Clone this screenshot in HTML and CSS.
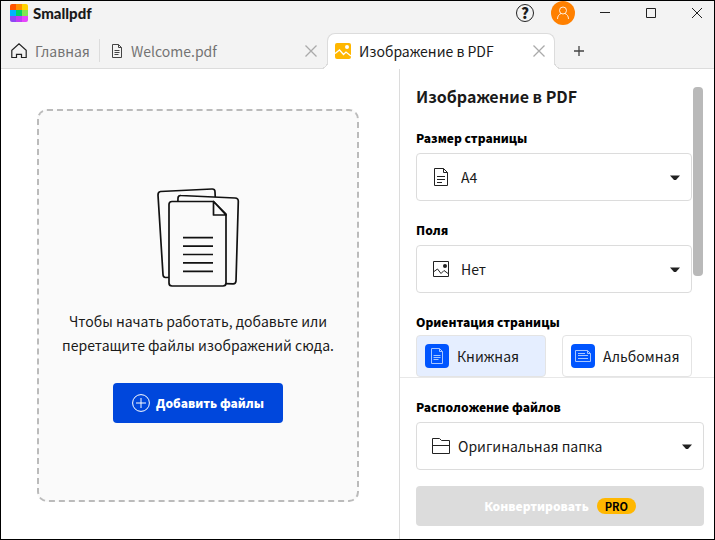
FILE: index.html
```html
<!DOCTYPE html>
<html lang="ru">
<head>
<meta charset="utf-8">
<meta name="viewport" content="width=device-width, initial-scale=1">
<title>Smallpdf</title>
<link rel="stylesheet" href="styles.css">
</head>
<body>
<div class="window">
  <header class="titlebar">
    <div class="brand">
      <svg class="brand-mark" viewBox="0 0 18 18" width="18" height="18" aria-hidden="true">
        <clipPath id="mark"><rect width="18" height="18" rx="2"/></clipPath>
        <g clip-path="url(#mark)">
          <path fill="#ff5300" d="M0 0h6v6H0z"/><path fill="#ff8f00" d="M6 0h6v6H6z"/><path fill="#ffd200" d="M12 0h6v6h-6z"/>
          <path fill="#00b4ff" d="M0 6h6v6H0z"/><path fill="#00d267" d="M6 6h6v6H6z"/><path fill="#81e650" d="M12 6h6v6h-6z"/>
          <path fill="#8f47f4" d="M0 12h6v6H0z"/><path fill="#c03cf5" d="M6 12h6v6H6z"/><path fill="#e646fa" d="M12 12h6v6h-6z"/>
        </g>
      </svg>
      <span class="brand-name">Smallpdf</span>
    </div>
    <div class="window-tools">
      <button class="help" type="button" aria-label="Справка">?</button>
      <button class="avatar" type="button" aria-label="Профиль">
        <svg viewBox="0 0 24 24" width="24" height="24" fill="none" stroke="#fff" stroke-opacity=".85"><circle cx="12" cy="9.500" r="3.500"/><path d="M6.500 18c0-3 1.500-4.500 3.500-5.500M17.500 18c0-3-1.500-4.500-3.500-5.500"/></svg>
      </button>
      <button class="caption" type="button" aria-label="Свернуть"><svg viewBox="0 0 12 12" width="12" height="12" stroke="#222"><path d="M1 5.500h10"/></svg></button>
      <button class="caption" type="button" aria-label="Развернуть"><svg viewBox="0 0 12 12" width="12" height="12" fill="none" stroke="#222"><path d="M1.500 1.500h9v9h-9z"/></svg></button>
      <button class="caption" type="button" aria-label="Закрыть"><svg viewBox="0 0 12 12" width="12" height="12" stroke="#222"><path d="M1 1l10 10M11 1L1 11"/></svg></button>
    </div>
  </header>

  <nav class="tabs">
    <a class="tab tab-home" href="#">
      <svg viewBox="0 0 16 16" width="16" height="16" fill="none" stroke="#222" stroke-width="1.200"><path d="M5.500 14.500H.8V7.200L8 .9l7.200 6.300v7.300h-4.700v-3.200h-5z"/></svg>
      <span>Главная</span>
    </a>
    <div class="tab tab-file">
      <a class="tab-link" href="#">
        <svg viewBox="0 0 12 16" width="12" height="16" fill="none" stroke="#444"><path d="M1.500 1.500h6l3 3v10h-9zM7.500 1.500v3h3M3.500 7.500h5M3.500 9.500h5M3.500 11.500h4"/></svg>
        <span>Welcome.pdf</span>
      </a>
      <button class="close" type="button" aria-label="Закрыть вкладку"><svg viewBox="0 0 12 12" width="12" height="12" stroke="#aaa" stroke-width="1.300"><path d="M.5.5l11 11M11.500.5L.5 11.500"/></svg></button>
    </div>
    <div class="tab tab-active">
      <a class="tab-link" href="#" aria-current="page">
        <svg viewBox="0 0 16 16" width="16" height="16"><rect width="16" height="16" rx="2" fill="#ffb700"/><circle cx="12" cy="4" r="2" fill="#fff"/><path d="M0 10.500L4.500 7l4 4.500L11 9l5 4" fill="none" stroke="#fff" stroke-width="1.300"/></svg>
        <span>Изображение в PDF</span>
      </a>
      <button class="close" type="button" aria-label="Закрыть вкладку"><svg viewBox="0 0 12 12" width="12" height="12" stroke="#aaa" stroke-width="1.300"><path d="M.5.5l11 11M11.500.5L.5 11.500"/></svg></button>
    </div>
    <button class="tab-add" type="button" aria-label="Новая вкладка"><svg viewBox="0 0 12 12" width="12" height="12" stroke="#444" stroke-width="1.300"><path d="M1 6h10M6 1v10"/></svg></button>
  </nav>

  <div class="content">
    <main class="workspace">
      <section class="dropzone">
        <svg class="papers" viewBox="0 0 84 102" width="84" height="102" fill="#fafafa" stroke="#111" stroke-width="1.700" stroke-linejoin="round" aria-hidden="true">
          <path d="M4.500 4.500L56 2q3-.2 3 3l4 84-53.500 1.500q-2.500 0-2.500-3L2 8q0-3.200 2.500-3.500z"/>
          <path d="M25 8.500l54 2.500q3.500.2 3.300 3.500L80 94q-.2 3-3 2.900L19 95l3-84q.2-2.700 3-2.500z"/>
          <path d="M16 14.500h41.500L70 27v69q0 3-3 3H16q-3 0-3-3V17.500q0-3 3-3z"/>
          <path d="M57.500 14.500V28H70z"/>
          <path d="M27 50.700h30M27 59.100h30M27 67.500h30M27 75.900h30M27 84.300h30"/>
        </svg>
        <p class="hint">Чтобы начать работать, добавьте или перетащите файлы изображений сюда.</p>
        <button class="add" type="button">
          <svg viewBox="0 0 18 18" width="18" height="18" fill="none" stroke="#fff"><circle cx="9" cy="9" r="8.400"/><path d="M9 4v10M4 9h10"/></svg>
          <span>Добавить файлы</span>
        </button>
      </section>
    </main>

    <aside class="panel">
      <div class="settings">
        <h1 class="panel-title">Изображение в PDF</h1>
        <div class="field">
          <label class="label" for="size">Размер страницы</label>
          <div class="picker">
            <svg class="picker-icon" viewBox="0 0 18 18" width="18" height="18" fill="none" stroke="#222"><path d="M2.500.5h9l4 4v13h-13zM11.500.5v4h4M5 8.500h8M5 11.500h8M5 14.500h5"/></svg>
            <select class="select" id="size"><option>A4</option></select>
            <svg class="arrow" viewBox="0 0 10 6" width="10" height="6"><path d="M0 .5h10L6 5H4z" fill="#222"/></svg>
          </div>
        </div>
        <div class="field">
          <label class="label" for="margin">Поля</label>
          <div class="picker">
            <svg class="picker-icon" viewBox="0 0 18 18" width="18" height="18" fill="none" stroke="#222"><path d="M1.500 1.500h15v15h-15z"/><circle cx="13" cy="6" r="2" fill="#222" stroke="none"/><path d="M2 11.500L5.500 9l3.500 4.500 3-3 4 3"/></svg>
            <select class="select" id="margin"><option>Нет</option></select>
            <svg class="arrow" viewBox="0 0 10 6" width="10" height="6"><path d="M0 .5h10L6 5H4z" fill="#222"/></svg>
          </div>
        </div>
        <fieldset class="field orientation">
          <legend class="label">Ориентация страницы</legend>
          <div class="choices">
            <label class="choice">
              <input class="choice-input" type="radio" name="orientation" checked>
              <svg viewBox="0 0 24 24" width="24" height="24" fill="none" stroke="#a9c7ff"><rect width="24" height="24" rx="4" fill="#0055ff" stroke="none"/><path d="M6.500 4.500h8l3 3v12h-11zM14.500 4.500v3h3M8.500 11.500h7M8.500 13.500h7M8.500 15.500h5"/></svg>
              <span>Книжная</span>
            </label>
            <label class="choice">
              <input class="choice-input" type="radio" name="orientation">
              <svg viewBox="0 0 24 24" width="24" height="24" fill="none" stroke="#a9c7ff"><rect width="24" height="24" rx="4" fill="#0055ff" stroke="none"/><path d="M4.500 6.500h12l3 3v8h-15zM16.500 6.500v3h3M7 9.500h7M7 11.500h10M7 14.500h10"/></svg>
              <span>Альбомная</span>
            </label>
          </div>
        </fieldset>
        <div class="scroll-thumb"></div>
      </div>

      <div class="output">
        <div class="field">
          <label class="label" for="folder">Расположение файлов</label>
          <div class="picker">
            <svg class="picker-icon" viewBox="0 0 18 18" width="18" height="18" fill="none" stroke="#222"><path d="M.5 1.500h7l2 2h8v13H.5zM.5 8.500h17"/></svg>
            <select class="select select-folder" id="folder"><option>Оригинальная папка</option></select>
            <svg class="arrow" viewBox="0 0 10 6" width="10" height="6"><path d="M0 .5h10L6 5H4z" fill="#222"/></svg>
          </div>
        </div>
        <button class="convert" type="button" disabled>
          <span>Конвертировать</span>
          <span class="badge">PRO</span>
        </button>
      </div>
    </aside>
  </div>
</div>
</body>
</html>
```
FILE: styles.css
```css
* {
  box-sizing: border-box;
}

body {
  margin: 0;
  color: #1a1a1a;
  font: 14px/24px "Noto Sans CJK SC", "Noto Sans", sans-serif;
}

button,
select {
  font: inherit;
  color: inherit;
}

button {
  display: flex;
  align-items: center;
  justify-content: center;
  padding: 0;
  border: 0;
  background: none;
}

a {
  color: inherit;
  text-decoration: none;
}

svg {
  display: block;
  flex: none;
}

.window {
  display: flex;
  flex-direction: column;
  min-height: 100vh;
  border: 1px solid #000;
  background: #fff;
}

.titlebar {
  display: flex;
  justify-content: space-between;
  height: 32px;
  padding-left: 9px;
  background: #f3f3f3;
}

.brand,
.window-tools {
  display: flex;
  align-items: center;
  height: 24px;
}

.brand {
  gap: 5px;
}

.brand-name {
  font: 900 15px/20px Lato, sans-serif;
}

.help {
  width: 18px;
  height: 18px;
  margin-right: 17px;
  border: 1px solid #222;
  border-radius: 50%;
  font-size: 15px;
  font-weight: 900;
  line-height: 16px;
}

.avatar {
  width: 24px;
  height: 24px;
  margin-right: 7px;
  border-radius: 50%;
  background: #ff8000;
}

.caption {
  width: 46px;
  height: 24px;
}

.window-tools .caption:last-child {
  margin-right: -6px;
}

.tabs {
  display: flex;
  height: 36px;
  border-bottom: 1px solid #dcdcdc;
  background: #f3f3f3;
}

.tab {
  display: flex;
  align-items: center;
  color: #737373;
}

.tab-home {
  gap: 8px;
  width: 98px;
  padding-left: 10px;
}

.tab-link {
  display: flex;
  flex: 1;
  align-items: center;
  gap: 8px;
}

.tab-file {
  position: relative;
  width: 228px;
  padding: 0 10px 0 12px;
}

.tab-file::before {
  content: "";
  position: absolute;
  top: 6px;
  bottom: 6px;
  left: 0;
  border-left: 1px solid #dcdcdc;
}

.close {
  width: 12px;
  height: 24px;
}

.tab-active {
  position: relative;
  width: 228px;
  height: 36px;
  padding: 0 9px 1px 7px;
  border: 1px solid #dcdcdc;
  border-bottom: 0;
  border-radius: 8px 8px 0 0;
  background: #fff;
  color: #1a1a1a;
}

.tab-active::before,
.tab-active::after {
  content: "";
  position: absolute;
  bottom: 0;
  width: 7px;
  height: 7px;
}

.tab-active::before {
  left: -7px;
  background: radial-gradient(circle at 0 0, #f3f3f3 6px, #dcdcdc 6px 7px, #fff 7px);
}

.tab-active::after {
  right: -7px;
  background: radial-gradient(circle at 100% 0, #f3f3f3 6px, #dcdcdc 6px 7px, #fff 7px);
}

.tab-add {
  width: 48px;
  height: 36px;
}

.content {
  display: flex;
  flex: 1;
}

.workspace {
  display: flex;
  flex: 1;
  padding: 40px 40px 37px 36px;
}

.dropzone {
  display: flex;
  flex: 1;
  flex-direction: column;
  align-items: center;
  justify-content: center;
  padding: 0 16px 1px;
  border: 2px dashed #bbb;
  border-radius: 10px;
  background: #fafafa;
}

.hint {
  margin: 20px 0 26px;
  text-align: center;
}

.add {
  gap: 6px;
  width: 170px;
  height: 40px;
  border-radius: 4px;
  background: #0047dc;
  color: #fff;
  font-size: 12px;
  font-weight: 900;
}

.panel {
  display: flex;
  flex: none;
  flex-direction: column;
  width: 315px;
  border-left: 1px solid #dcdcdc;
}

.settings {
  position: relative;
  display: flex;
  flex-direction: column;
  gap: 17px;
  padding: 15px 22px 0 16px;
  border-bottom: 1px solid #e8e8e8;
}

.scroll-thumb {
  position: absolute;
  top: 18px;
  right: 11px;
  width: 10px;
  height: 189px;
  border-radius: 4px;
  background: #b9b9b9;
}

.panel-title {
  margin: 0 0 1px;
  font-size: 16px;
  font-weight: 700;
  line-height: 24px;
}

.field {
  display: flex;
  flex-direction: column;
  gap: 3px;
  min-width: 0;
  margin: 0;
  padding: 0;
  border: 0;
}

.label {
  padding: 0;
  color: #000;
  font-size: 12px;
  font-weight: 900;
  line-height: 24px;
}

.picker {
  position: relative;
}

.picker-icon {
  position: absolute;
  top: 15px;
  left: 16px;
}

.arrow {
  position: absolute;
  top: 22px;
  right: 12px;
}

.select {
  width: 100%;
  height: 48px;
  padding: 0 32px 0 44px;
  border: 1px solid #dcdcdc;
  border-radius: 4px;
  background: #fff;
  appearance: none;
}

.select-folder {
  padding-left: 41px;
}

.orientation {
  display: block;
}

.choices {
  display: grid;
  grid-template-columns: 1fr 1fr;
  gap: 16px;
  padding-top: 1px;
}

.choice {
  display: flex;
  align-items: center;
  gap: 8px;
  height: 42px;
  padding-left: 8px;
  border: 1px solid #e4e4e4;
  border-radius: 4px;
}

.choice:has(:checked) {
  background: #e5eeff;
}

.choice-input {
  position: absolute;
  opacity: 0;
}

.output {
  display: flex;
  flex-direction: column;
  gap: 16px;
  padding: 17px 10px 13px 16px;
}

.convert {
  gap: 8px;
  height: 40px;
  border-radius: 4px;
  background: #dcdcdc;
  color: #fff;
  font-size: 12px;
  font-weight: 900;
}

.badge {
  width: 39px;
  border-radius: 8px;
  background: #ffb700;
  color: #000;
  font-size: 11px;
  font-weight: 700;
  line-height: 16px;
}
```
